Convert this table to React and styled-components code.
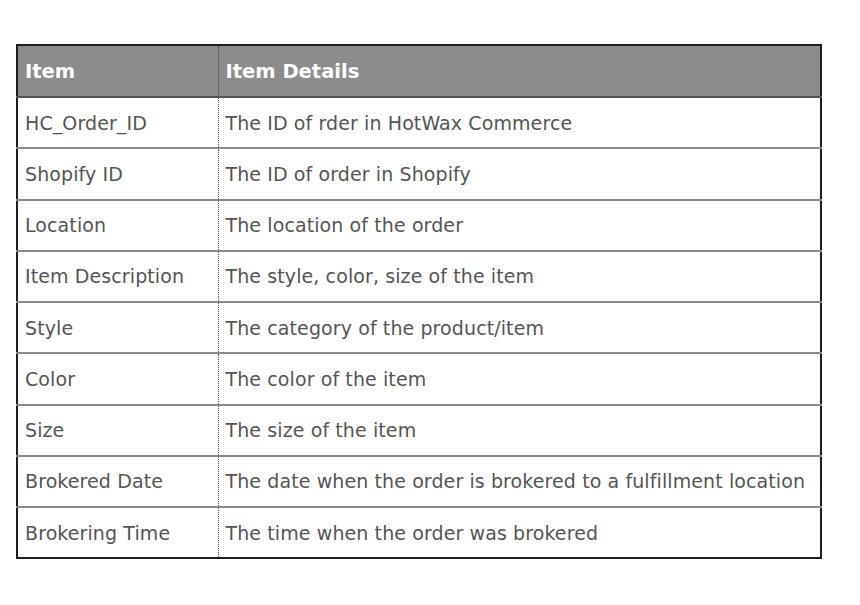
import React from 'react'
import styled, { createGlobalStyle } from 'styled-components'

const GlobalStyle = createGlobalStyle`
  html, body {
    margin: 0;
    padding: 0;
    background: #ffffff;
  }
  body {
    font-family: "DejaVu Sans", "Liberation Sans", sans-serif;
  }
`

const Page = styled.div`
  width: 860px;
  height: 605px;
  padding: 44px 0 0 16px;
  box-sizing: border-box;
`

const Table = styled.table`
  width: 806px;
  border-collapse: collapse;
  border: 2px solid #1e1e1e;
  table-layout: fixed;
`

const HeadCell = styled.th`
  height: 52px;
  background: #8c8c8c;
  color: #ffffff;
  font-weight: 700;
  font-size: 19.5px;
  text-align: left;
  padding: 0 7px;
  border-bottom: 2px solid #555555;
  border-left: ${p => (p.$divided ? '1px dotted #444' : 'none')};
  box-sizing: border-box;
`

const Cell = styled.td`
  height: 51.25px;
  color: #555555;
  font-size: 19px;
  letter-spacing: 0.1px;
  padding: 0 7px;
  white-space: nowrap;
  border-top: 2px solid #8a8a8a;
  border-left: ${p => (p.$divided ? '1px dotted #555' : 'none')};
  box-sizing: border-box;
`

const rows = [
  ['HC_Order_ID', 'The ID of rder in HotWax Commerce'],
  ['Shopify ID', 'The ID of order in Shopify'],
  ['Location', 'The location of the order'],
  ['Item Description', 'The style, color, size of the item'],
  ['Style', 'The category of the product/item'],
  ['Color', 'The color of the item'],
  ['Size', 'The size of the item'],
  ['Brokered Date', 'The date when the order is brokered to a fulfillment location'],
  ['Brokering Time', 'The time when the order was brokered'],
]

export default function App() {
  return (
    <Page>
      <GlobalStyle />
      <Table>
        <colgroup>
          <col style={{ width: 201 }} />
          <col />
        </colgroup>
        <thead>
          <tr>
            <HeadCell>Item</HeadCell>
            <HeadCell $divided>Item Details</HeadCell>
          </tr>
        </thead>
        <tbody>
          {rows.map(([item, details]) => (
            <tr key={item}>
              <Cell>{item}</Cell>
              <Cell $divided>{details}</Cell>
            </tr>
          ))}
        </tbody>
      </Table>
    </Page>
  )
}
